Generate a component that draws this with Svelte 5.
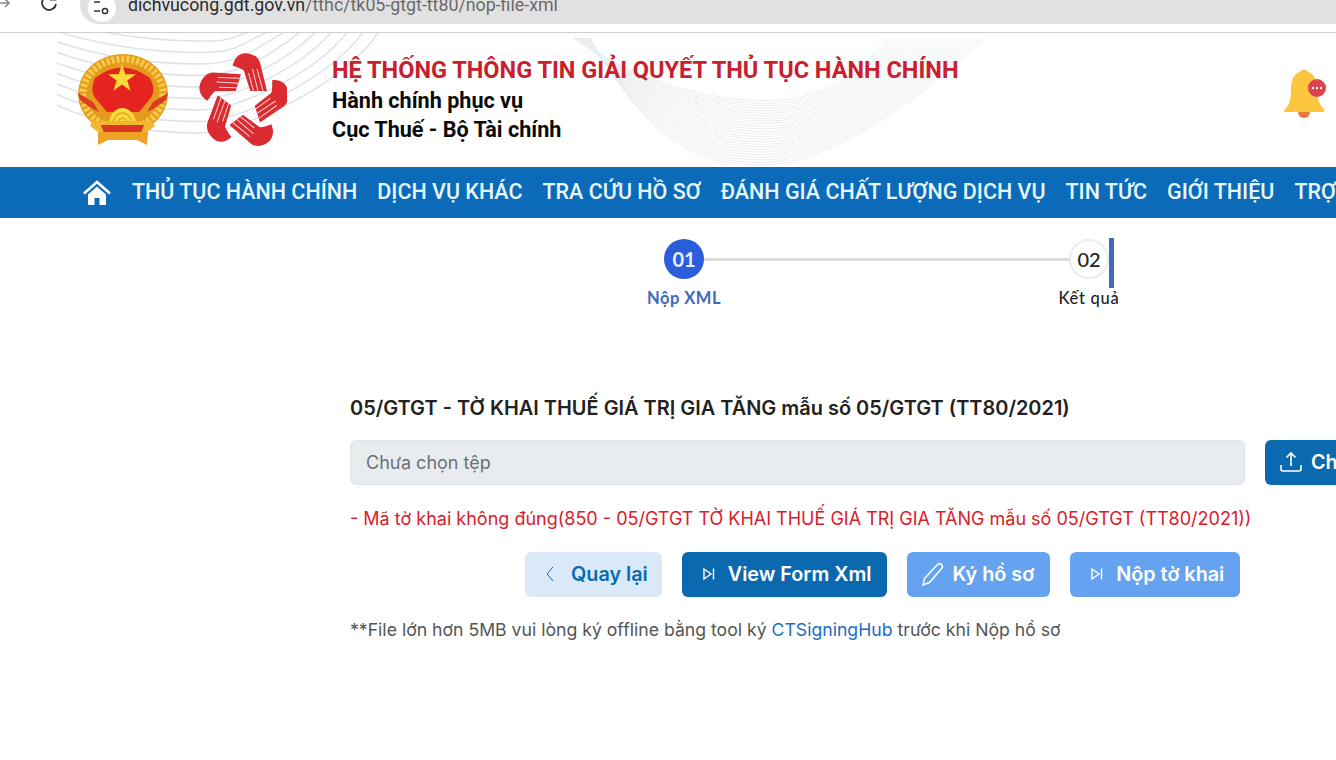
<script lang="ts">
	const NAV_ITEMS = [
		'THỦ TỤC HÀNH CHÍNH',
		'DỊCH VỤ KHÁC',
		'TRA CỨU HỒ SƠ',
		'ĐÁNH GIÁ CHẤT LƯỢNG DỊCH VỤ',
		'TIN TỨC',
		'GIỚI THIỆU',
		'TRỢ GIÚP',
	];

	// Sagging arcs behind the logos
	const arcs = Array.from({ length: 9 }, (_, i) => {
		const mid = 8 + i * 11.5;
		const left = -12 + i * 10.5;
		const right = 255 + i * 15.5;
		return `M57 ${left} C100 ${mid - 8} 150 ${mid} 200 ${mid} C240 ${mid} ${right - 30} ${mid * 0.5} ${right} -2`;
	});

	// Swirl ribbon: upper and lower edge, lines interpolated between them
	const UPPER = [573, 5, 640, 50, 720, 72, 783, 67, 830, 62, 865, 37, 885, 5];
	const LOWER = [590, 5, 640, 90, 680, 132, 760, 132, 830, 132, 920, 67, 985, 5];
	const ribbon = Array.from({ length: 26 }, (_, i) => {
		const t = i / 25;
		const p = UPPER.map((u, k) => (u + (LOWER[k] - u) * t).toFixed(1));
		return `M${p[0]} ${p[1]} C${p[2]} ${p[3]} ${p[4]} ${p[5]} ${p[6]} ${p[7]} C${p[8]} ${p[9]} ${p[10]} ${p[11]} ${p[12]} ${p[13]}`;
	});
</script>

<div class="chrome">
	<svg class="back" width="14" height="14" viewBox="0 0 14 14"><path d="M1 3h11M8 -1l4 4-4 4" fill="none" stroke="#8a8a8a" stroke-width="1.6" /></svg>
	<svg class="reload" width="20" height="20" viewBox="0 0 20 20"><path d="M15.5 4.5A7 7 0 1 0 17 10" fill="none" stroke="#333" stroke-width="1.8" /><path d="M16.5 0v5.5H11" fill="none" stroke="#333" stroke-width="1.8" /></svg>
	<div class="omnibox">
		<span class="tune">
			<svg width="18" height="18" viewBox="0 0 18 18"><path d="M1 3h6M1 12h6" stroke="#333" stroke-width="1.6" /><circle cx="12" cy="12" r="2.6" fill="none" stroke="#333" stroke-width="1.5" /></svg>
		</span>
		<span class="url"><b>dichvucong.gdt.gov.vn</b>/tthc/tk05-gtgt-tt80/nop-file-xml</span>
	</div>
</div>

<header class="site-header">
	<svg class="swirl" width="1336" height="134" viewBox="0 0 1336 134">
		{#each arcs as d}
			<path {d} fill="none" stroke="#dbe4e8" stroke-width="1.5" />
		{/each}
		{#each ribbon as d}
			<path {d} fill="none" stroke="#ebeef1" stroke-width="1" />
		{/each}
	</svg>

	<div class="logos">
		<svg width="92" height="94" viewBox="0 0 92 94">
			<ellipse cx="46" cy="42" rx="45" ry="40" fill="#e59a1e" />
			<ellipse cx="46" cy="42" rx="40" ry="35" fill="none" stroke="#f6cc4a" stroke-width="7" stroke-dasharray="3 2" />
			<path d="M18 26Q45 5 73 26Q80 40 72 48L62 60H30L20 48Q12 40 18 26Z" fill="#e5231f" />
			<path d="M45 12l3.300 10.300 10.700 0-8.700 6.300 3.300 10.200-8.600-6.300-8.600 6.300 3.300-10.200-8.700-6.300 10.700 0Z" fill="#fbd93a" />
			<path d="M1 41L16 50L22 60L14 56L3 48Z M91 41L76 50L70 60L78 56L89 48Z" fill="#dd3a22" />
			<path d="M32 72a13.500 16 0 0 1 27 0Z" fill="#f6dc3c" />
			<path d="M36 72a9.500 11 0 0 1 19 0M41 72a4.500 6 0 0 1 9 0" fill="none" stroke="#e9a51f" stroke-width="1.400" />
			<path d="M16 69H75L78 74L70 80H21L13 74Z" fill="#f2b632" />
			<path d="M24 73H67L64 81H27Z" fill="#d8361f" />
			<path d="M21 80H71L70 93L60 88H31L21 93Z" fill="#eea226" />
		</svg>

		<svg width="88" height="99" viewBox="-44 -49 88 94" preserveAspectRatio="none">
			<defs>
				<g id="hand">
					<path d="M-10.300 -34C-9 -41 -4 -46 2 -46C9 -46 15 -43 17 -37L24 -10L7.300 -10L0.700 -29.700C-3 -32 -7 -33 -10.300 -34Z" fill="#d92b30" />
					<path d="M10.500 -10L5.500 -27M15 -10L9.500 -31M20 -10L14 -31" stroke="#f6d5d5" stroke-width="1" fill="none" />
				</g>
			</defs>
			{#each [0, 72, 144, 216, 288] as a}
				<use href="#hand" transform="rotate({a})" />
			{/each}
		</svg>
	</div>

	<div class="titles">
		<h1>HỆ THỐNG THÔNG TIN GIẢI QUYẾT THỦ TỤC HÀNH CHÍNH</h1>
		<p>Hành chính phục vụ</p>
		<p>Cục Thuế - Bộ Tài chính</p>
	</div>

	<svg class="bell" width="44" height="54" viewBox="0 0 44 54">
		<circle cx="20" cy="7" r="5" fill="#f0a93e" />
		<path d="M20 3C30 3 33 12 33 22C33 32 36 37 40 41C41 43 40 44 38 44H2C0 44 -1 43 1 41C5 37 7 32 7 22C7 12 10 3 20 3Z" fill="#fdc63f" />
		<path d="M14 44h12a6 6 0 0 1-12 0Z" fill="#e8793a" />
		<circle cx="33" cy="20" r="9" fill="#e0414f" />
		<circle cx="29" cy="20" r="1.200" fill="#fff" /><circle cx="33" cy="20" r="1.200" fill="#fff" /><circle cx="37" cy="20" r="1.200" fill="#fff" />
	</svg>
</header>

<nav class="site-nav">
	<svg class="home" width="28" height="26" viewBox="0 0 28 26">
		<path d="M1 13.500L14 2L27 13.500" fill="none" stroke="#fff" stroke-width="2.600" />
		<path d="M5 14.500L14 6.500L23 14.500V25H16.500V18H11.500V25H5Z" fill="#fff" />
	</svg>
	{#each NAV_ITEMS as item}
		<span class="nav-item">{item}</span>
	{/each}
</nav>

<section class="stepper">
	<div class="step active">
		<span class="dot">01</span>
		<span class="step-label">Nộp XML</span>
	</div>
	<div class="step-line"></div>
	<div class="step">
		<span class="dot">02</span>
		<span class="step-label">Kết quả</span>
	</div>
	<div class="step-bar"></div>
</section>

<main class="form">
	<h2>05/GTGT - TỜ KHAI THUẾ GIÁ TRỊ GIA TĂNG mẫu số 05/GTGT (TT80/2021)</h2>

	<div class="file-row">
		<div class="file-input">Chưa chọn tệp</div>
		<button class="btn primary choose">
			<svg width="24" height="24" viewBox="0 0 24 24" fill="none" stroke="#fff" stroke-width="1.600"><path d="M2 15v4a2 2 0 0 0 2 2h16a2 2 0 0 0 2-2v-4M12 16V3M7.500 7.500L12 3l4.500 4.500" /></svg>
			Chọn tệp
		</button>
	</div>

	<p class="error">- Mã tờ khai không đúng(850 - 05/GTGT TỜ KHAI THUẾ GIÁ TRỊ GIA TĂNG mẫu số 05/GTGT (TT80/2021))</p>

	<div class="actions">
		<button class="btn light">
			<svg width="10" height="16" viewBox="0 0 10 16" fill="none" stroke="#0b6bb0" stroke-width="1"><path d="M8 1L2 8l6 7" /></svg>
			Quay lại
		</button>
		<button class="btn primary">
			<svg width="14" height="14" viewBox="0 0 14 14" fill="none" stroke="#fff" stroke-width="1.400"><path d="M2 2l7 5-7 5ZM11.500 1.500v11" /></svg>
			View Form Xml
		</button>
		<button class="btn muted sign">
			<svg width="24" height="24" viewBox="0 0 24 24" fill="none" stroke="#fff" stroke-width="1.500"><path d="M17.500 2.500a2.800 2.800 0 0 1 4 4L9.500 20.500l-6.500 2.500 1.500-6.500Z" /></svg>
			Ký hồ sơ
		</button>
		<button class="btn muted">
			<svg width="14" height="14" viewBox="0 0 14 14" fill="none" stroke="#fff" stroke-width="1.400"><path d="M2 2l7 5-7 5ZM11.500 1.500v11" /></svg>
			Nộp tờ khai
		</button>
	</div>

	<p class="note">**File lớn hơn 5MB vui lòng ký offline bằng tool ký <a href="#hub">CTSigningHub</a> trước khi Nộp hồ sơ</p>
</main>

<style>
	:global(body) {
		background: #fff;
		overflow: hidden;
		width: 1336px;
		height: 760px;
	}

	.chrome {
		height: 32px;
		border-bottom: 1px solid #cfcfcf;
		display: flex;
		overflow: hidden;
		position: relative;
		font-family: Roboto, sans-serif;
	}

	.back {
		position: absolute;
		left: -3px;
		top: 0;
	}

	.reload {
		position: absolute;
		left: 39px;
		top: -6px;
	}

	.omnibox {
		margin: -14px 0 0 80px;
		height: 38px;
		flex: 1;
		background: #e1e1e1;
		border-radius: 19px 0 0 19px;
		display: flex;
		align-items: center;
		padding-left: 8px;
		gap: 12px;
		box-sizing: border-box;
	}

	.tune {
		width: 28px;
		height: 28px;
		margin-top: 6px;
		border-radius: 50%;
		background: #fff;
		display: flex;
		align-items: center;
		justify-content: center;
		flex: none;
	}

	.url {
		font-size: 17.8px;
		color: #6a6a6a;
		margin-top: -2px;
		white-space: nowrap;
	}

	.url b {
		font-weight: 400;
		color: #2a2a2a;
	}

	.site-header {
		position: relative;
		height: 134px;
		display: flex;
		align-items: center;
		box-sizing: border-box;
		padding-left: 77px;
		font-family: Roboto, sans-serif;
	}

	.swirl {
		position: absolute;
		left: 0;
		top: 0;
	}

	.logos {
		position: relative;
		display: flex;
		align-items: center;
		gap: 30px;
		width: 255px;
		margin-top: -2px;
	}

	.titles {
		position: relative;
	}

	.titles h1 {
		margin: 0 0 2px;
		font-size: 23.5px;
		line-height: 28px;
		font-weight: 700;
		color: #c8202d;
		white-space: nowrap;
	}

	.titles p {
		margin: 0;
		font-size: 21.6px;
		line-height: 29px;
		font-weight: 700;
		color: #0a0a0a;
	}

	.bell {
		position: absolute;
		left: 1284px;
		top: 35px;
	}

	.site-nav {
		height: 51px;
		box-sizing: border-box;
		padding: 0 0 2px 83px;
		background: #0b6bb8;
		display: flex;
		align-items: center;
		gap: 20px;
		font-family: Roboto, sans-serif;
		white-space: nowrap;
		overflow: hidden;
	}

	.home {
		margin: 2px 1px 0 0;
		flex: none;
	}

	.nav-item {
		font-size: 21.5px;
		font-weight: 500;
		color: #e6f6fd;
		flex: none;
	}

	.stepper {
		height: 90px;
		position: relative;
		display: flex;
		align-items: flex-start;
		padding: 21px 0 0 644px;
		box-sizing: border-box;
		font-family: Lato, sans-serif;
	}

	.step {
		width: 80px;
		display: flex;
		flex-direction: column;
		align-items: center;
		gap: 9px;
	}

	.dot {
		width: 40px;
		height: 40px;
		box-sizing: border-box;
		border-radius: 50%;
		border: 2px solid #ececec;
		display: flex;
		align-items: center;
		justify-content: center;
		font-size: 20px;
		font-weight: 500;
		color: #222;
	}

	.active .dot {
		background: #2b5fd9;
		border: none;
		color: #e8f0fc;
		font-weight: 700;
	}

	.step-label {
		font-size: 16.5px;
		font-weight: 500;
		line-height: 20px;
		color: #222;
		letter-spacing: 0.75px;
		white-space: nowrap;
	}

	.active .step-label {
		color: #3d68bd;
		font-weight: 700;
		letter-spacing: 0.5px;
	}

	.step-line {
		width: 365px;
		height: 3px;
		margin: 19px -20px 0;
		background: #dddddd;
	}

	.step-bar {
		position: absolute;
		left: 1109px;
		top: 20px;
		width: 5px;
		height: 50px;
		background: #4169b8;
	}

	.form {
		padding: 88px 0 0 350px;
		font-family: Inter, sans-serif;
	}

	.form h2 {
		margin: 0 0 20px;
		font-size: 19.95px;
		line-height: 24px;
		font-weight: 600;
		color: #222;
		white-space: nowrap;
	}

	.file-row {
		display: flex;
		gap: 20px;
		width: 1100px;
	}

	.file-input {
		width: 895px;
		height: 45px;
		box-sizing: border-box;
		flex: none;
		padding: 0 15px;
		display: flex;
		align-items: center;
		background: #e9ecef;
		border: 1px solid #e2e5e8;
		border-radius: 6px;
		font-size: 18px;
		color: #6b7178;
	}

	.error {
		margin: 23px 0 0;
		font-size: 18px;
		line-height: 22px;
		color: #d8202c;
		white-space: nowrap;
	}

	.actions {
		display: flex;
		gap: 20px;
		margin: 22px 0 0 175px;
	}

	.btn {
		height: 45px;
		box-sizing: border-box;
		border: none;
		border-radius: 6px;
		padding: 0 16px 1px 20px;
		display: flex;
		align-items: center;
		gap: 12px;
		font-family: Inter, sans-serif;
		font-size: 19.8px;
		font-weight: 600;
		flex: none;
		white-space: nowrap;
	}

	.primary {
		background: #0b69b0;
		color: #fff;
	}

	.light {
		background: #d9e9f7;
		color: #0b6bb0;
		gap: 16px;
		padding-right: 14px;
	}

	.muted {
		background: #65a3f0;
		color: #fff;
	}

	.sign {
		padding-left: 13px;
		gap: 8px;
	}

	.choose {
		padding-left: 14px;
		gap: 8px;
	}

	.note {
		margin: 22px 0 0;
		font-size: 17.65px;
		line-height: 22px;
		color: #555;
		white-space: nowrap;
	}

	.note a {
		color: #1b6ec2;
		text-decoration: none;
	}
</style>
